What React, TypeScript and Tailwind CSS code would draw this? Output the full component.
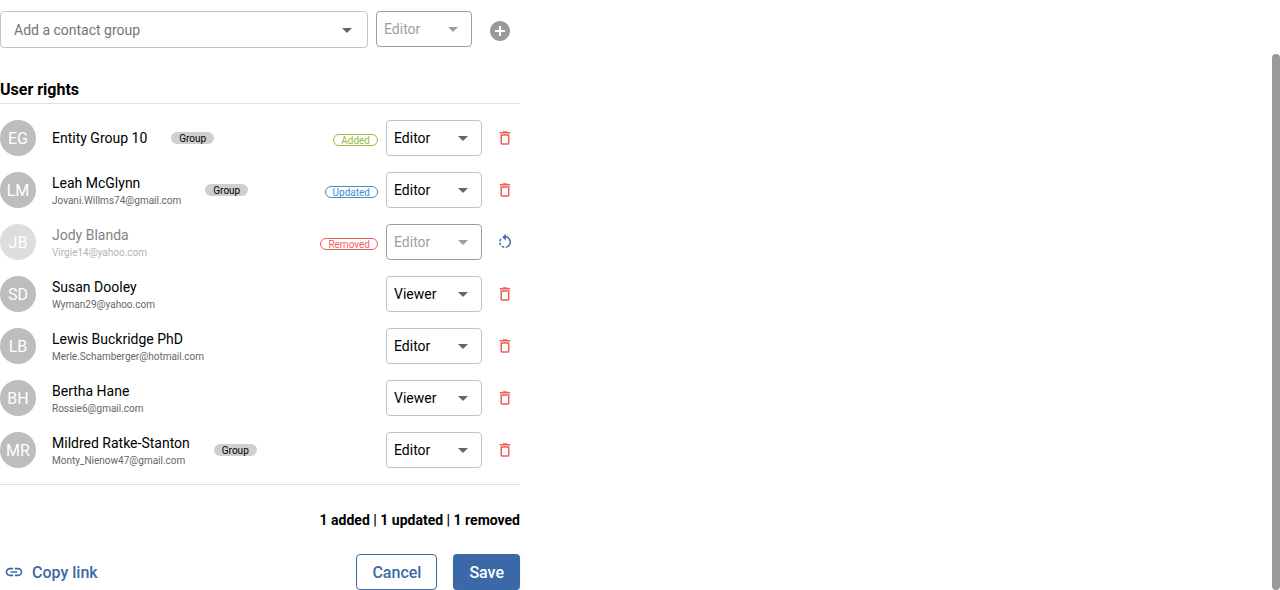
import React, { useState } from "react";
import {
  MdAddCircle,
  MdArrowDropDown,
  MdDeleteOutline,
  MdLink,
  MdRotateLeft,
} from "react-icons/md";

type Status = "added" | "updated" | "removed";
type Role = "Viewer" | "Editor";

interface Entry {
  name: string;
  initials: string;
  email?: string;
  group?: boolean;
  status?: Status;
  role: Role;
}

const entries: Entry[] = [
  { name: "Entity Group 10", initials: "EG", group: true, status: "added", role: "Editor" },
  { name: "Leah McGlynn", initials: "LM", email: "Jovani.Willms74@gmail.com", group: true, status: "updated", role: "Editor" },
  { name: "Jody Blanda", initials: "JB", email: "Virgie14@yahoo.com", status: "removed", role: "Editor" },
  { name: "Susan Dooley", initials: "SD", email: "Wyman29@yahoo.com", role: "Viewer" },
  { name: "Lewis Buckridge PhD", initials: "LB", email: "Merle.Schamberger@hotmail.com", role: "Editor" },
  { name: "Bertha Hane", initials: "BH", email: "Rossie6@gmail.com", role: "Viewer" },
  { name: "Mildred Ratke-Stanton", initials: "MR", email: "Monty_Nienow47@gmail.com", group: true, role: "Editor" },
];

const statusStyle: Record<Status, string> = {
  added: "border-[#95ba45] text-[#95ba45]",
  updated: "border-[#418bcf] text-[#418bcf]",
  removed: "border-[#ee5f5b] text-[#ee5f5b]",
};

const statusLabel: Record<Status, string> = {
  added: "Added",
  updated: "Updated",
  removed: "Removed",
};

function RoleSelect({ label, initial, disabled = false }: { label: string; initial: Role; disabled?: boolean }) {
  const [role, setRole] = useState<Role>(initial);
  return (
    <div className="relative w-24 shrink-0">
      <select
        aria-label={label}
        value={role}
        disabled={disabled}
        onChange={(e) => setRole(e.target.value as Role)}
        className="block h-9 w-full appearance-none rounded border border-[#c4c4c4] bg-white pr-8 pl-[7px] text-sm text-black disabled:border-[#9e9e9e] disabled:text-[#9e9e9e] disabled:opacity-100"
      >
        <option>Viewer</option>
        <option>Editor</option>
      </select>
      <MdArrowDropDown
        size={24}
        className={`pointer-events-none absolute top-1.5 right-[7px] ${disabled ? "text-[#9e9e9e]" : "text-[#666666]"}`}
      />
    </div>
  );
}

function EntryRow({ entry }: { entry: Entry }) {
  const removed = entry.status === "removed";
  return (
    <li className="flex items-center py-2">
      <div className={`flex min-w-0 flex-1 items-center ${removed ? "opacity-50" : ""}`}>
        <span className="flex size-9 shrink-0 items-center justify-center rounded-full bg-[#bdbdbd] pt-0.5 text-base leading-none text-white">
          {entry.initials}
        </span>
        <div className="ml-4 flex min-w-0 flex-col">
          <span className="text-sm leading-[22px] text-black">{entry.name}</span>
          {entry.email && <span className="text-[10px] leading-[14px] text-[#666666]">{entry.email}</span>}
        </div>
        {entry.group && (
          <span className="ml-6 flex h-3 items-center rounded-full bg-[#cfcfcf] px-2 pt-0.5 text-[10px] leading-none text-black">
            Group
          </span>
        )}
      </div>
      {entry.status && (
        <span
          className={`mt-1 mr-2 flex h-3 items-center rounded-full border px-[7px] pt-0.5 text-[10px] leading-none ${statusStyle[entry.status]}`}
        >
          {statusLabel[entry.status]}
        </span>
      )}
      <RoleSelect label={`Rights of ${entry.name}`} initial={entry.role} disabled={removed} />
      <button
        type="button"
        aria-label={removed ? `Restore ${entry.name}` : `Remove ${entry.name}`}
        className={`mr-1.5 ml-3.5 flex p-0 ${removed ? "text-[#3b69a8]" : "text-[#ee5f5b]"}`}
      >
        {removed ? <MdRotateLeft size={18} /> : <MdDeleteOutline size={18} />}
      </button>
    </li>
  );
}

export default function App() {
  return (
    <div className="flex min-h-screen justify-between bg-white font-[Roboto,sans-serif] text-black">
      <main className="w-full max-w-[520px] pt-[11px]">
        <form className="flex items-start" onSubmit={(e) => e.preventDefault()}>
          <div className="relative flex-1">
            <input
              type="text"
              aria-label="Add a contact group"
              placeholder="Add a contact group"
              className="block h-[37px] w-full rounded border border-[#c4c4c4] pr-10 pl-[13px] text-sm placeholder:text-[#757575]"
            />
            <MdArrowDropDown size={24} className="pointer-events-none absolute top-[7px] right-[9px] text-[#666666]" />
          </div>
          <div className="ml-2">
            <RoleSelect label="Rights of the new group" initial="Editor" disabled />
          </div>
          <button type="submit" aria-label="Add" className="mt-2 mr-2 ml-4 flex p-0 text-[#9a9a9a]">
            <MdAddCircle size={24} />
          </button>
        </form>

        <section>
          <h2 className="mt-[30px] border-b border-[#e0e0e0] pb-px text-base leading-6 font-bold">User rights</h2>
          <ul className="border-b border-[#e0e0e0] py-2">
            {entries.map((entry) => (
              <EntryRow key={entry.name} entry={entry} />
            ))}
          </ul>
        </section>

        <p className="mt-[25px] text-right text-sm leading-5 font-bold">1 added | 1 updated | 1 removed</p>

        <div className="mt-6 flex items-center">
          <button type="button" className="flex h-9 items-center gap-2 pl-1 text-base font-medium text-[#3b69a8]">
            <MdLink size={20} />
            <span className="pt-0.5">Copy link</span>
          </button>
          <button
            type="button"
            className="ml-auto h-9 rounded border border-[#3b69a8] px-[15px] pt-0.5 text-base font-medium text-[#3b69a8]"
          >
            Cancel
          </button>
          <button
            type="button"
            className="ml-4 h-9 rounded bg-[#3b69a8] px-4 pt-0.5 text-base font-medium text-white shadow"
          >
            Save
          </button>
        </div>
      </main>
      <div aria-hidden="true" className="mt-[54px] w-2 rounded-full bg-[#999999]" />
    </div>
  );
}
